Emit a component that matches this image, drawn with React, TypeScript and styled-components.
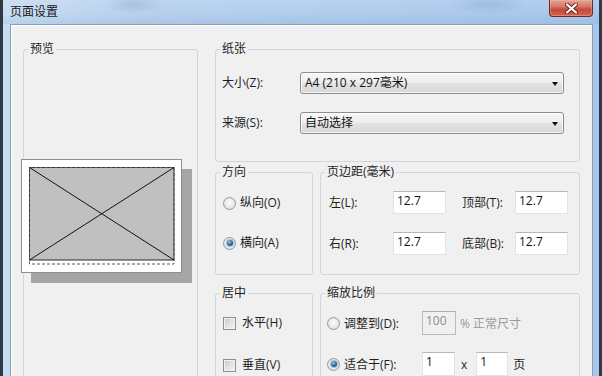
import React from "react";
import styled, { createGlobalStyle } from "styled-components";

const Global = createGlobalStyle`
  html, body { margin: 0; padding: 0; background: #2b3642; }
  body {
    font-family: "Open Sans", "Noto Sans CJK SC", sans-serif;
    font-size: 12px;
    color: #1e1e1e;
  }
`;

const Window = styled.div`
  width: 602px;
  height: 376px;
  box-sizing: border-box;
  overflow: hidden;
  display: flex;
  flex-direction: column;
  border-left: 3px solid #2f3945;
  border-right: 3px solid #2f3945;
  background:
    radial-gradient(ellipse 30px 10px at 130px 4px, rgba(120, 150, 190, 0.35), transparent),
    radial-gradient(ellipse 40px 10px at 485px 4px, rgba(120, 150, 190, 0.35), transparent),
    linear-gradient(90deg, #c8dcf2 0%, #b6d0ee 25%, #a8c7eb 100%);
`;

const TitleBar = styled.div`
  height: 24px;
  flex: none;
  display: flex;
  align-items: flex-start;
  justify-content: space-between;
  padding: 0 6px 0 7px;
  background: linear-gradient(
    180deg,
    rgba(255, 255, 255, 0.1) 0%,
    rgba(255, 255, 255, 0) 55%,
    rgba(70, 110, 160, 0.1) 100%
  );
`;

const Title = styled.div`
  line-height: 24px;
  font-size: 12px;
  color: #1b1b1b;
`;

const CloseButton = styled.div`
  width: 44px;
  height: 17px;
  box-sizing: border-box;
  border: 1px solid #6e2a24;
  border-top: none;
  border-radius: 0 0 4px 4px;
  background: linear-gradient(180deg, #e3a394 0%, #d67a68 40%, #c6473a 60%, #d2654f 100%);
  box-shadow: inset 0 0 0 1px rgba(255, 200, 190, 0.35);
  display: flex;
  align-items: center;
  justify-content: center;
`;

const FrameBody = styled.div`
  flex: 1;
  min-height: 0;
  display: flex;
  padding: 0 6px 0 7px;
`;

const Client = styled.div`
  flex: 1;
  min-width: 0;
  border: 1px solid #8a9cb2;
  border-bottom: none;
  background: #f0f0f0;
  box-shadow: inset 1px 1px 0 #ffffff;
  padding: 16px 12px 0 12px;
  display: grid;
  grid-template-columns: 175px 365px;
  column-gap: 17px;
  align-items: start;
  overflow: hidden;
`;

const Group = styled.fieldset<{ $w?: number; $h?: number }>`
  margin: 0;
  padding: 0;
  min-width: 0;
  box-sizing: border-box;
  border: 1px solid #d3d6d9;
  border-radius: 3px;
  ${(p) => (p.$w ? `width: ${p.$w}px; flex: none;` : "flex: 1;")}
  ${(p) => (p.$h ? `height: ${p.$h}px;` : "")}
`;

const Legend = styled.legend`
  padding: 0 2px;
  margin-left: 4px;
  line-height: 16px;
  font-size: 12px;
  color: #1e1e1e;
`;

const RightColumn = styled.div`
  display: flex;
  flex-direction: column;
`;

const GroupRow = styled.div<{ $top: number }>`
  display: flex;
  gap: 7px;
  margin-top: ${(p) => p.$top}px;
  align-items: stretch;
`;

/* Preview */
const PreviewArea = styled.div`
  padding-top: 102px;
  margin-left: -3px;
`;

const Paper = styled.div`
  width: 161px;
  height: 114px;
  box-sizing: border-box;
  border: 1px solid #8f8f8f;
  background: #ffffff;
  box-shadow: 10px 10px 0 #a5a5a5;
`;

/* Paper group */
const PaperGrid = styled.div`
  display: grid;
  grid-template-columns: 78px 264px;
  row-gap: 18px;
  align-items: center;
  padding: 15px 0 27px 6px;
`;

const FieldLabel = styled.span<{ $indent?: number }>`
  line-height: 16px;
  white-space: nowrap;
  padding-left: ${(p) => p.$indent ?? 0}px;
`;

const Combo = styled.div`
  height: 22px;
  box-sizing: border-box;
  border: 1px solid #8d8d8d;
  border-radius: 3px;
  background: linear-gradient(180deg, #f7f7f7 0%, #eeeeee 48%, #e2e2e2 52%, #d9d9d9 100%);
  box-shadow: inset 0 0 0 1px rgba(255, 255, 255, 0.75);
  display: flex;
  align-items: center;
  justify-content: space-between;
  padding: 0 5px 0 4px;
  line-height: 20px;
  color: #111;
`;

const Arrow = styled.span`
  width: 0;
  height: 0;
  border-left: 3.5px solid transparent;
  border-right: 3.5px solid transparent;
  border-top: 4px solid #111;
  margin-top: 1px;
`;

/* Orientation & centering */
const OptionList = styled.div<{ $top: number; $gap: number }>`
  display: flex;
  flex-direction: column;
  gap: ${(p) => p.$gap}px;
  padding: ${(p) => p.$top}px 0 0 7px;
`;

const Option = styled.label<{ $gap: number }>`
  display: flex;
  align-items: center;
  gap: ${(p) => p.$gap}px;
  height: 16px;
  line-height: 16px;
  white-space: nowrap;
`;

const Radio = styled.span<{ $on?: boolean }>`
  width: 13px;
  height: 13px;
  flex: none;
  box-sizing: border-box;
  border-radius: 50%;
  border: 1px solid #8d99a5;
  background: radial-gradient(circle at 50% 45%, #fbfbfb 0%, #e9e9e9 55%, #cfd3d8 100%);
  display: flex;
  align-items: center;
  justify-content: center;
  &::after {
    content: "";
    display: ${(p) => (p.$on ? "block" : "none")};
    width: 6px;
    height: 6px;
    border-radius: 50%;
    background: radial-gradient(circle at 40% 35%, #9fd0f0 0%, #2f72a8 45%, #173b5a 100%);
    box-shadow: 0 0 0 1px rgba(90, 140, 185, 0.45);
  }
`;

const Check = styled.span`
  width: 13px;
  height: 13px;
  flex: none;
  box-sizing: border-box;
  border: 1px solid #8e8f8f;
  background: linear-gradient(135deg, #c6c9ce 0%, #e2e3e5 55%, #f6f6f6 100%);
  box-shadow: inset 0 0 0 1px #f2f2f2;
`;

/* Margins */
const MarginGrid = styled.div`
  display: grid;
  grid-template-columns: 64px 53px 69px 53px;
  row-gap: 18px;
  align-items: center;
  padding: 11px 0 19px 8px;
`;

const TextBox = styled.div<{ $w: number; $h?: number; $disabled?: boolean }>`
  width: ${(p) => p.$w}px;
  height: ${(p) => p.$h ?? 23}px;
  box-sizing: border-box;
  border: 1px solid ${(p) => (p.$disabled ? "#b9bcbf" : "#e1e3e8")};
  border-top-color: ${(p) => (p.$disabled ? "#adb0b3" : "#b3b6bd")};
  background: ${(p) => (p.$disabled ? "#f0f0f0" : "#ffffff")};
  color: ${(p) => (p.$disabled ? "#8c8c8c" : "#111")};
  padding: 0 3px;
  line-height: 18px;
  flex: none;
`;

/* Scale */
const ScaleList = styled.div`
  display: flex;
  flex-direction: column;
  gap: 17px;
  padding: 10px 0 15px 6px;
`;

const ScaleRow = styled.div`
  display: flex;
  align-items: center;
  height: 24px;
  white-space: nowrap;
`;

const ScaleChoice = styled.label`
  width: 95px;
  flex: none;
  display: flex;
  align-items: center;
  gap: 4px;
`;

const Aside = styled.span<{ $left: number; $right?: number; $muted?: boolean }>`
  margin-left: ${(p) => p.$left}px;
  margin-right: ${(p) => p.$right ?? 0}px;
  color: ${(p) => (p.$muted ? "#9a9a9a" : "#1e1e1e")};
`;

function PaperDrawing() {
  return (
    <svg width="159" height="112" viewBox="0 0 159 112">
      <rect x="7.5" y="7.5" width="144.5" height="92.5" fill="#c0c0c0" stroke="#2a2a2a" strokeWidth="1" />
      <rect
        x="7.5"
        y="7.5"
        width="144.5"
        height="96.5"
        fill="none"
        stroke="#5a5a5a"
        strokeWidth="1"
        strokeDasharray="3 2"
      />
      <line x1="7.5" y1="7.5" x2="152" y2="100" stroke="#111" strokeWidth="1" />
      <line x1="152" y1="7.5" x2="7.5" y2="100" stroke="#111" strokeWidth="1" />
    </svg>
  );
}

function CloseGlyph() {
  return (
    <svg width="13" height="11" viewBox="0 0 13 11">
      <path d="M2 1.5 L11 9.5 M11 1.5 L2 9.5" stroke="#6b1e18" strokeWidth="4" strokeLinecap="round" />
      <path d="M2 1.5 L11 9.5 M11 1.5 L2 9.5" stroke="#ffffff" strokeWidth="2.2" strokeLinecap="round" />
    </svg>
  );
}

export default function App() {
  return (
    <>
      <Global />
      <Window>
        <TitleBar>
          <Title>页面设置</Title>
          <CloseButton>
            <CloseGlyph />
          </CloseButton>
        </TitleBar>
        <FrameBody>
          <Client>
            <Group $h={420}>
              <Legend>预览</Legend>
              <PreviewArea>
                <Paper>
                  <PaperDrawing />
                </Paper>
              </PreviewArea>
            </Group>

            <RightColumn>
              <Group>
                <Legend>纸张</Legend>
                <PaperGrid>
                  <FieldLabel>大小(Z):</FieldLabel>
                  <Combo>
                    <span>A4 (210 x 297毫米)</span>
                    <Arrow />
                  </Combo>
                  <FieldLabel>来源(S):</FieldLabel>
                  <Combo>
                    <span>自动选择</span>
                    <Arrow />
                  </Combo>
                </PaperGrid>
              </Group>

              <GroupRow $top={2}>
                <Group $w={98}>
                  <Legend>方向</Legend>
                  <OptionList $top={15} $gap={24}>
                    <Option $gap={4}>
                      <Radio />
                      纵向(O)
                    </Option>
                    <Option $gap={4}>
                      <Radio $on />
                      横向(A)
                    </Option>
                  </OptionList>
                </Group>
                <Group>
                  <Legend>页边距(毫米)</Legend>
                  <MarginGrid>
                    <FieldLabel>左(L):</FieldLabel>
                    <TextBox $w={53}>12.7</TextBox>
                    <FieldLabel $indent={16}>顶部(T):</FieldLabel>
                    <TextBox $w={53}>12.7</TextBox>
                    <FieldLabel>右(R):</FieldLabel>
                    <TextBox $w={53}>12.7</TextBox>
                    <FieldLabel $indent={16}>底部(B):</FieldLabel>
                    <TextBox $w={53}>12.7</TextBox>
                  </MarginGrid>
                </Group>
              </GroupRow>

              <GroupRow $top={10}>
                <Group $w={98}>
                  <Legend>居中</Legend>
                  <OptionList $top={14} $gap={26}>
                    <Option $gap={6}>
                      <Check />
                      水平(H)
                    </Option>
                    <Option $gap={6}>
                      <Check />
                      垂直(V)
                    </Option>
                  </OptionList>
                </Group>
                <Group>
                  <Legend>缩放比例</Legend>
                  <ScaleList>
                    <ScaleRow>
                      <ScaleChoice>
                        <Radio />
                        调整到(D):
                      </ScaleChoice>
                      <TextBox $w={34} $h={24} $disabled>
                        100
                      </TextBox>
                      <Aside $left={4} $muted>
                        % 正常尺寸
                      </Aside>
                    </ScaleRow>
                    <ScaleRow>
                      <ScaleChoice>
                        <Radio $on />
                        适合于(F):
                      </ScaleChoice>
                      <TextBox $w={33} $h={24}>
                        1
                      </TextBox>
                      <Aside $left={6} $right={9}>
                        x
                      </Aside>
                      <TextBox $w={32} $h={24}>
                        1
                      </TextBox>
                      <Aside $left={5}>页</Aside>
                    </ScaleRow>
                  </ScaleList>
                </Group>
              </GroupRow>
            </RightColumn>
          </Client>
        </FrameBody>
      </Window>
    </>
  );
}
